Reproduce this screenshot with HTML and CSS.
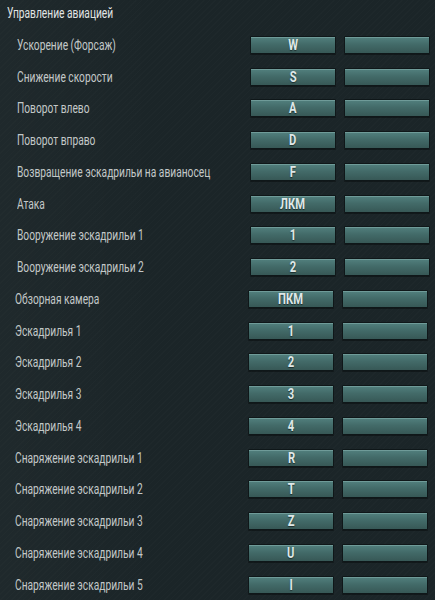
FILE: index.html
```html
<!DOCTYPE html>
<html lang="ru">
<head>
  <meta charset="UTF-8">
  <meta name="viewport" content="width=device-width, initial-scale=1">
  <title>Управление авиацией</title>
  <link rel="stylesheet" href="styles.css">
</head>
<body>
  <div class="panel">
    <div class="title"><span class="narrow">Управление авиацией</span></div>

    <div class="group group-flight">
      <div class="row"><span class="label">Ускорение (Форсаж)</span><span class="key"><span class="key-text">W</span></span><span class="key"></span></div>
      <div class="row"><span class="label">Снижение скорости</span><span class="key"><span class="key-text">S</span></span><span class="key"></span></div>
      <div class="row"><span class="label">Поворот влево</span><span class="key"><span class="key-text">A</span></span><span class="key"></span></div>
      <div class="row"><span class="label">Поворот вправо</span><span class="key"><span class="key-text">D</span></span><span class="key"></span></div>
      <div class="row"><span class="label">Возвращение эскадрильи на авианосец</span><span class="key"><span class="key-text">F</span></span><span class="key"></span></div>
      <div class="row"><span class="label">Атака</span><span class="key"><span class="key-text">ЛКМ</span></span><span class="key"></span></div>
      <div class="row"><span class="label">Вооружение эскадрильи 1</span><span class="key"><span class="key-text">1</span></span><span class="key"></span></div>
      <div class="row"><span class="label">Вооружение эскадрильи 2</span><span class="key"><span class="key-text">2</span></span><span class="key"></span></div>
    </div>

    <div class="group group-squad">
      <div class="row"><span class="label">Обзорная камера</span><span class="key"><span class="key-text">ПКМ</span></span><span class="key"></span></div>
      <div class="row"><span class="label">Эскадрилья 1</span><span class="key"><span class="key-text">1</span></span><span class="key"></span></div>
      <div class="row"><span class="label">Эскадрилья 2</span><span class="key"><span class="key-text">2</span></span><span class="key"></span></div>
      <div class="row"><span class="label">Эскадрилья 3</span><span class="key"><span class="key-text">3</span></span><span class="key"></span></div>
      <div class="row"><span class="label">Эскадрилья 4</span><span class="key"><span class="key-text">4</span></span><span class="key"></span></div>
      <div class="row"><span class="label">Снаряжение эскадрильи 1</span><span class="key"><span class="key-text">R</span></span><span class="key"></span></div>
      <div class="row"><span class="label">Снаряжение эскадрильи 2</span><span class="key"><span class="key-text">T</span></span><span class="key"></span></div>
      <div class="row"><span class="label">Снаряжение эскадрильи 3</span><span class="key"><span class="key-text">Z</span></span><span class="key"></span></div>
      <div class="row"><span class="label">Снаряжение эскадрильи 4</span><span class="key"><span class="key-text">U</span></span><span class="key"></span></div>
      <div class="row"><span class="label">Снаряжение эскадрильи 5</span><span class="key"><span class="key-text">I</span></span><span class="key"></span></div>
    </div>
  </div>
</body>
</html>
```

FILE: styles.css
```css
* {
  box-sizing: border-box;
}

html, body {
  height: 100%;
}

body {
  margin: 0;
  font-family: Roboto, "DejaVu Sans Condensed", sans-serif;
  font-size: 14px;
  color: #c3c8c8;
  background-color: #1b2528;
  background-image:
    repeating-linear-gradient(135deg, rgba(255,255,255,0.012) 0 1px, transparent 1px 4px),
    linear-gradient(90deg, rgba(255,255,255,0.02), transparent 160px);
  overflow: hidden;
}

/* no condensed face installed, so squeeze the text horizontally */
.narrow,
.label {
  display: inline-block;
  transform: scaleX(0.73);
  transform-origin: left center;
}

.key-text {
  display: inline-block;
  transform: scaleX(0.8);
  transform-origin: center;
}

.title {
  height: 29px;
  line-height: 26px;
  padding-left: 7px;
  color: #e2e5e5;
}

.row {
  display: flex;
  align-items: center;
  gap: 8px;
  height: 31.75px;
}

.group-flight {
  padding: 0 5px 0 17px;
}

.group-squad {
  padding: 0 7px 0 15px;
}

.label {
  flex: 1;
  min-width: 0;
  white-space: nowrap;
}

.key {
  flex: none;
  width: 86px;
  height: 18px;
  display: flex;
  align-items: center;
  justify-content: center;
  border: 1px solid #0f1719;
  border-radius: 1px;
  background: linear-gradient(to bottom, #52807e 0%, #436b69 45%, #375856 100%);
  box-shadow: inset 0 1px 0 rgba(170, 210, 205, 0.35), 0 1px 0 rgba(0, 0, 0, 0.35);
  color: #dfe8e8;
  font-weight: bold;
  font-size: 14px;
  text-shadow: 0 1px 1px rgba(0, 0, 0, 0.5);
}
```
